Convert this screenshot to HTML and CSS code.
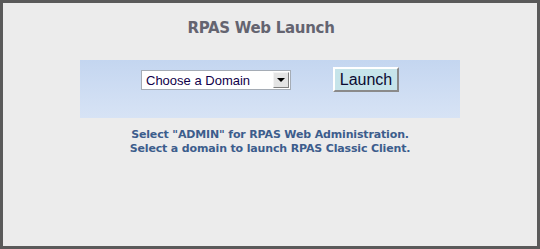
FILE: index.html
```html
<!DOCTYPE html>
<html lang="en">
<head>
    <meta charset="UTF-8">
    <title>RPAS Web Launch</title>
    <link rel="stylesheet" href="styles.css">
</head>
<body>
    <div class="frame">
        <h1 class="title">RPAS Web Launch</h1>

        <!-- panel with domain chooser and launch button -->
        <div class="panel">
            <div class="select-box">
                <span class="select-text">Choose a Domain</span>
                <span class="select-arrow"></span>
            </div>
            <button class="launch-button">Launch</button>
        </div>

        <p class="note">
            Select "ADMIN" for RPAS Web Administration.<br>
            Select a domain to launch RPAS Classic Client.
        </p>
    </div>
</body>
</html>
```

FILE: styles.css
```css
html, body {
    margin: 0;
    height: 100%;
}

.frame {
    box-sizing: border-box;
    height: 100%;
    border: 3px solid #5a5a5a;
    background-color: #ececec;
    display: flex;
    flex-direction: column;
    align-items: center;
}

.title {
    font-family: "DejaVu Sans", Verdana, sans-serif;
    font-size: 15px;
    font-weight: bold;
    color: #646470;
    margin: 15px 18px 0 0;
    line-height: 20px;
    letter-spacing: -0.3px;
}

.panel {
    width: 380px;
    height: 58px;
    margin-top: 22px;
    box-sizing: border-box;
    padding-top: 7px;
    background: linear-gradient(#c4d6f0, #d7e3f5);
    display: flex;
    justify-content: center;
    align-items: flex-start;
    gap: 42px;
}

.select-box {
    margin-top: 3px;
    width: 150px;
    height: 20px;
    box-sizing: border-box;
    border: 1px solid #a5acb5;
    background: #fff;
    display: flex;
    align-items: center;
    justify-content: space-between;
    padding: 0 1px 0 4px;
}

.select-text {
    font-family: "Liberation Sans", Arial, sans-serif;
    font-size: 13px;
    color: #10004a;
}

.select-arrow {
    width: 16px;
    height: 16px;
    box-sizing: border-box;
    background: #e4e4e4;
    border: 1px solid #808080;
    border-top-color: #f4f4f4;
    border-left-color: #f4f4f4;
    position: relative;
}

.select-arrow::after {
    content: "";
    position: absolute;
    left: 3px;
    top: 5px;
    border-left: 4px solid transparent;
    border-right: 4px solid transparent;
    border-top: 4px solid #000;
}

.launch-button {
    width: 66px;
    height: 25px;
    padding: 0;
    background: #c6e4ea;
    border: 2px solid;
    border-color: #ffffff #8a8a8a #8a8a8a #ffffff;
    font-family: "Liberation Sans", Arial, sans-serif;
    font-size: 16px;
    color: #0a0a30;
}

.note {
    margin: 10px 0 0 0;
    font-family: "DejaVu Sans", Verdana, sans-serif;
    font-size: 11px;
    font-weight: bold;
    line-height: 14px;
    color: #3c5d8c;
    text-align: center;
    letter-spacing: -0.15px;
}
```
